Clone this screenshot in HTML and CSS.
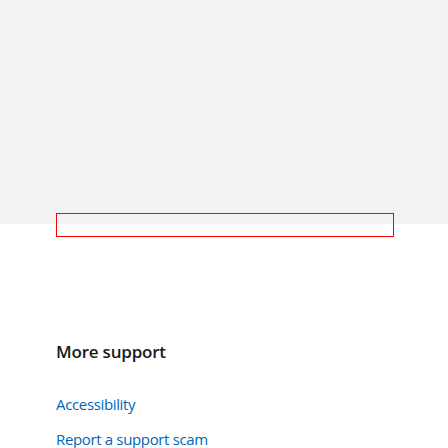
FILE: index.html
```html
<!DOCTYPE html>
<html>
<head>
<meta charset="utf-8">
<link rel="stylesheet" href="styles.css">
</head>
<body>
<div class="hero"></div>
<div class="search-box"></div>
<section class="more">
  <h2 class="more-title">More support</h2>
  <ul class="more-links">
    <li><a href="#" class="more-link">Accessibility</a></li>
    <li><a href="#" class="more-link">Report a support scam</a></li>
  </ul>
</section>
</body>
</html>
```

FILE: styles.css
```css
html, body {
  margin: 0;
  padding: 0;
  background: #ffffff;
  font-family: "Open Sans", "Noto Sans", sans-serif;
}
.hero {
  height: 224px;
  background: #f2f2f2;
}
.search-box {
  box-sizing: border-box;
  width: 338px;
  height: 24px;
  margin: -11px 0 0 56px;
  border: 1px solid #f00;
}
.more {
  padding: 0 56px;
}
.more-title {
  margin: 103px 0 0;
  font-size: 17px;
  line-height: 24px;
  font-weight: 600;
  letter-spacing: -0.2px;
  color: #1a1a1a;
}
.more-links {
  list-style: none;
  margin: 28px 0 0;
  padding: 0;
  display: flex;
  flex-direction: column;
  gap: 11px;
}
.more-link {
  font-size: 15px;
  line-height: 24px;
  letter-spacing: -0.35px;
  color: #0067b8;
  text-decoration: none;
}
```
